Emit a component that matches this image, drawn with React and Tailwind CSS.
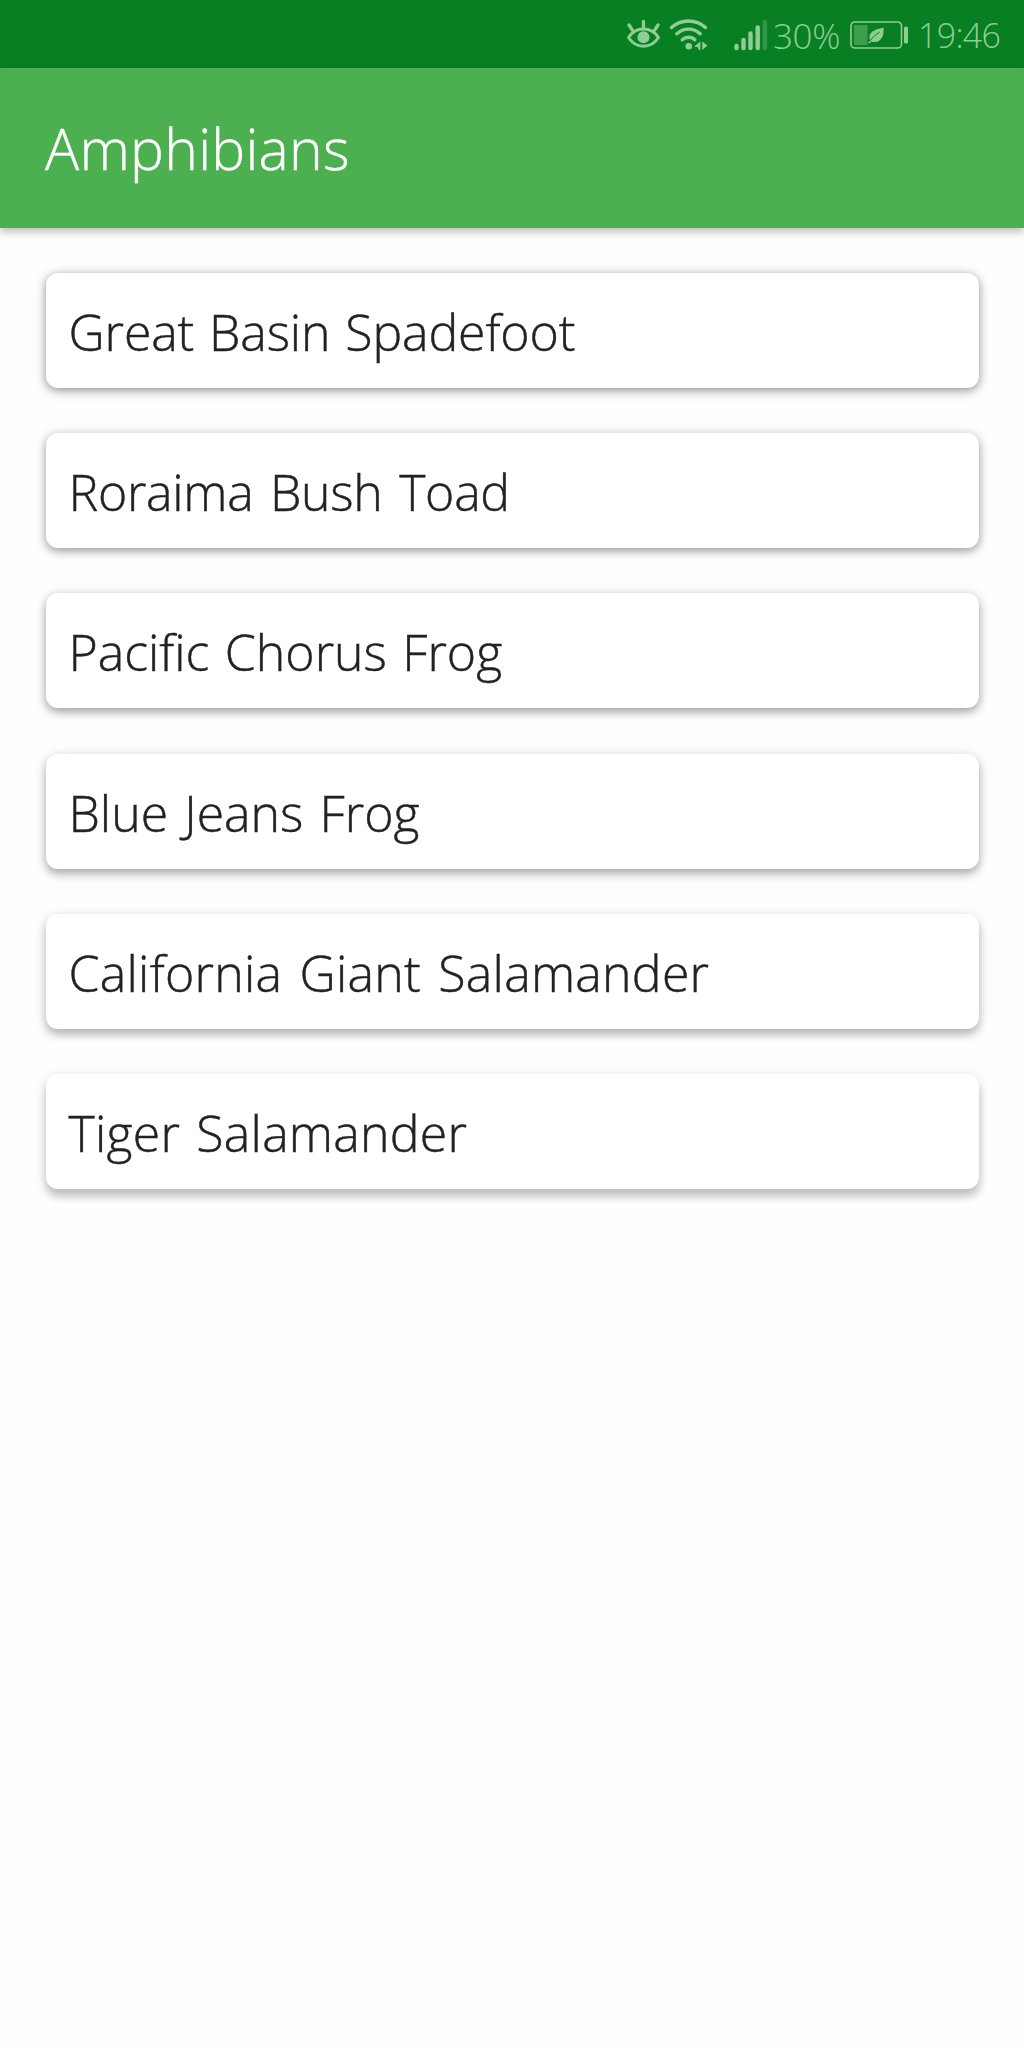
const amphibians = [
  { name: "Great Basin Spadefoot", spacing: "tracking-[-0.12px] [word-spacing:2px]", shadow: "shadow-[0_2px_9px_rgba(0,0,0,0.32),0_3px_14px_rgba(0,0,0,0.16)]" },
  { name: "Roraima Bush Toad", spacing: "tracking-[-0.3px] [word-spacing:4px]", shadow: "shadow-[0_3px_9px_rgba(0,0,0,0.30),0_2px_14px_rgba(0,0,0,0.14)]" },
  { name: "Pacific Chorus Frog", spacing: "tracking-[0px] [word-spacing:2.4px]", shadow: "shadow-[0_4px_9px_rgba(0,0,0,0.28),0_2px_14px_rgba(0,0,0,0.14)]" },
  { name: "Blue Jeans Frog", spacing: "tracking-[0px] [word-spacing:3.2px]", shadow: "shadow-[0_5px_9px_rgba(0,0,0,0.25),0_2px_14px_rgba(0,0,0,0.13)]" },
  { name: "California Giant Salamander", spacing: "tracking-[0.26px] [word-spacing:4px]", shadow: "shadow-[0_6px_9px_rgba(0,0,0,0.22),0_2px_14px_rgba(0,0,0,0.12)]" },
  { name: "Tiger Salamander", spacing: "tracking-[0.24px] [word-spacing:3px]", shadow: "shadow-[0_8px_9px_rgba(0,0,0,0.19),0_2px_14px_rgba(0,0,0,0.12)]" },
];

function EyeIcon() {
  return (
    <svg className="h-8 w-9 shrink-0" viewBox="0 0 36 32" fill="none" stroke="currentColor" strokeLinecap="round">
      <path d="M2.5 18.5C10 7.2 25 7.2 32.5 18.5C25 30.2 10 30.2 2.5 18.5Z" strokeWidth="3" strokeLinejoin="round" />
      <circle cx="17.5" cy="18.2" r="6" fill="currentColor" stroke="none" />
      <path d="M17.5 2.5V9M3 6L6.5 11.3M32 6L28.5 11.3" strokeWidth="3.3" />
    </svg>
  );
}

function WifiIcon() {
  return (
    <svg className="h-8 w-10 shrink-0" viewBox="0 0 40 32" fill="none" stroke="currentColor" strokeLinecap="round" strokeWidth="3.4">
      <path d="M2.5 8.5C12 -0.2 27 -0.2 36.5 8.5" />
      <path d="M7.8 14.8C14.5 8.5 24.5 8.5 31.2 14.8" />
      <path d="M13.2 20.8C17 17.4 22.5 17.4 25.8 20.8" />
      <circle cx="19.8" cy="27.2" r="3.3" fill="currentColor" stroke="none" />
      <path d="M31.4 22.4V31H29.4V28.6L25.2 27.6ZM33.2 22.4V31L38.4 26.4Z" fill="currentColor" stroke="none" />
    </svg>
  );
}

function SignalIcon() {
  return (
    <svg className="h-8 w-[34px] shrink-0" viewBox="0 0 34 32" stroke="currentColor" strokeLinecap="round" strokeWidth="4.4">
      <path d="M2.5 27V29M9.5 21V29M16.5 14.5V29M23.7 8.5V29" />
      <path d="M30.9 3V29" opacity="0.3" />
    </svg>
  );
}

function BatteryIcon() {
  return (
    <svg className="h-7 w-[59px] shrink-0" viewBox="0 0 59 28" fill="none">
      <rect x="1" y="1" width="50.5" height="26" rx="4" stroke="currentColor" strokeWidth="1.6" />
      <rect x="4" y="4" width="13.5" height="20" rx="1" fill="currentColor" opacity="0.4" />
      <rect x="54" y="5.5" width="4" height="17" rx="1.5" fill="currentColor" />
      <path d="M33.5 6.5C34.5 16 30 23 21.5 20.5L19 22.5L18.3 21.6L20 19.3C17.5 11.5 24 8.8 33.5 6.5Z" fill="currentColor" />
      <path d="M19.5 20.5C22 17 25 14 29.5 11.2" stroke="#087f23" strokeWidth="1" />
    </svg>
  );
}

export default function App() {
  return (
    <div className="min-h-[2048px] w-full bg-[#fefefe] font-['Open_Sans',sans-serif] font-light">
      <div className="flex h-[68px] items-center bg-[#087f23] pt-px pl-[626px] leading-none whitespace-nowrap text-[#90cd94]">
        <EyeIcon />
        <div className="ml-[7px] flex"><WifiIcon /></div>
        <div className="ml-[25px] flex"><SignalIcon /></div>
        <span className="ml-[5px] w-[77px] pt-px text-[35px] tracking-[-0.4px]">30%</span>
        <BatteryIcon />
        <span className="ml-[9px] pt-px text-[34px] tracking-[-0.7px]">19:46</span>
      </div>
      <header className="flex h-[160px] items-center bg-[#4caf50] pl-[45px] shadow-[0_4px_8px_rgba(0,0,0,0.25)]">
        <h1 className="text-[57px] leading-[64px] tracking-[0.25px] whitespace-nowrap text-white [-webkit-text-stroke:0.4px_white]">Amphibians</h1>
      </header>
      <main className="flex flex-col gap-[45.2px] px-[45.5px] pt-[45px]">
        {amphibians.map((item) => (
          <div key={item.name} className={`flex h-[115px] items-center rounded-xl bg-white pt-[3px] pl-[23px] text-[50px] leading-[64px] whitespace-nowrap text-[#222] [-webkit-text-stroke:0.45px_#222] ${item.shadow} ${item.spacing}`}>
            {item.name}
          </div>
        ))}
      </main>
    </div>
  );
}
